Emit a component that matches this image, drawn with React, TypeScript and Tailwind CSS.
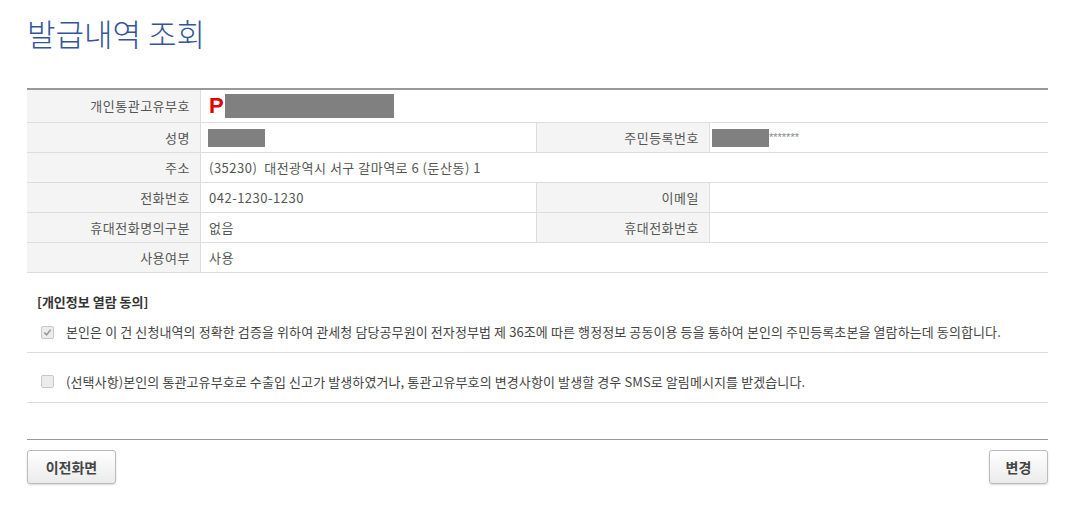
import React from "react";

const font = { fontFamily: '"Malgun Gothic", "Noto Sans CJK KR", "Noto Sans", sans-serif' };

const Redact = ({ className }: { className: string }) => (
  <span className={`inline-block bg-[#808080] ${className}`} />
);

const Label = ({ children, h = "h-[29px]" }: { children: React.ReactNode; h?: string }) => (
  <div className={`flex items-center justify-end bg-[#f4f4f4] pr-[10px] tracking-[0.5px] text-[#555] ${h}`}>{children}</div>
);

const Value = ({ children, h = "h-[29px]" }: { children?: React.ReactNode; h?: string }) => (
  <div className={`flex items-center pl-[8px] tracking-[0.5px] text-[#555] ${h}`}>{children}</div>
);

const Row = ({ children }: { children: React.ReactNode }) => (
  <div className="grid grid-cols-[173px_336px_173px_1fr] border-b border-[#ddd] [&>*+*]:border-l [&>*+*]:border-[#ddd]">
    {children}
  </div>
);

const FullRow = ({ children }: { children: React.ReactNode }) => (
  <div className="grid grid-cols-[173px_1fr] border-b border-[#ddd] [&>*+*]:border-l [&>*+*]:border-[#ddd]">
    {children}
  </div>
);

const CheckBox = ({ checked }: { checked?: boolean }) => (
  <span className="flex h-[13px] w-[13px] shrink-0 items-center justify-center rounded-[2px] border border-[#c8c8c8] bg-[#ececec]">
    {checked && (
      <svg width="9" height="9" viewBox="0 0 10 10">
        <path d="M1.5 5.2 L4 7.6 L8.6 2" fill="none" stroke="#9a9a9a" strokeWidth="1.8" />
      </svg>
    )}
  </span>
);

const btn =
  "h-[34px] rounded-[3px] border border-[#bbb] bg-gradient-to-b from-white to-[#ebebeb] text-[14px] font-bold text-[#444] shadow-[0_1px_2px_rgba(0,0,0,0.15)]";

export default function App() {
  return (
    <div className="min-h-[515px] w-[1079px] bg-white text-[13px]" style={font}>
      <div className="ml-[27px] w-[1021px]">
        <h1 className="pt-[12px] text-[31px] font-light leading-[42px] text-[#34559b]">발급내역 조회</h1>

        <div className="mt-[34px] border-t-2 border-[#999]">
          <FullRow>
            <Label h="h-[32px]">개인통관고유부호</Label>
            <Value h="h-[32px]">
              <span className="text-[22px] font-bold leading-none text-[#e00000]" style={{ fontFamily: '"Liberation Sans", sans-serif' }}>
                P
              </span>
              <Redact className="ml-[1px] h-[24px] w-[169px]" />
            </Value>
          </FullRow>
          <Row>
            <Label>성명</Label>
            <Value>
              <Redact className="-ml-[1px] h-[18px] w-[57px]" />
            </Value>
            <Label>주민등록번호</Label>
            <Value>
              <Redact className="-ml-[6px] h-[18px] w-[57px]" />
              <span className="text-[11px] tracking-normal text-[#888]" style={{ fontFamily: '"Liberation Sans", sans-serif' }}>*******</span>
            </Value>
          </Row>
          <FullRow>
            <Label>주소</Label>
            <Value>(35230)&nbsp;&nbsp;대전광역시 서구 갈마역로 6 (둔산동) 1</Value>
          </FullRow>
          <Row>
            <Label>전화번호</Label>
            <Value>042-1230-1230</Value>
            <Label>이메일</Label>
            <Value />
          </Row>
          <Row>
            <Label>휴대전화명의구분</Label>
            <Value>없음</Value>
            <Label>휴대전화번호</Label>
            <Value />
          </Row>
          <FullRow>
            <Label>사용여부</Label>
            <Value>사용</Value>
          </FullRow>
        </div>

        <div className="mt-[19px] pl-[10px] font-bold leading-[20px] text-[#333]">[개인정보 열람 동의]</div>

        <div className="flex h-[41px] items-center gap-[12px] border-b border-[#ddd] pl-[14px] text-[#444]">
          <CheckBox checked />
          <span className="tracking-[0.1px]">
            본인은 이 건 신청내역의 정확한 검증을 위하여 관세청 담당공무원이 전자정부법 제 36조에 따른 행정정보 공동이용 등을 통하여 본인의 주민등록초본을 열람하는데 동의합니다.
          </span>
        </div>
        <div className="flex h-[50px] items-center gap-[12px] border-b border-[#ddd] pl-[14px] pt-[8px] text-[#444]">
          <CheckBox />
          <span className="tracking-[0.1px]">
            (선택사항)본인의 통관고유부호로 수출입 신고가 발생하였거나, 통관고유부호의 변경사항이 발생할 경우 SMS로 알림메시지를 받겠습니다.
          </span>
        </div>

        <div className="mt-[36px] flex justify-between border-t border-[#999] pt-[10px]">
          <button className={`${btn} w-[89px]`}>이전화면</button>
          <button className={`${btn} w-[59px]`}>변경</button>
        </div>
      </div>
    </div>
  );
}
